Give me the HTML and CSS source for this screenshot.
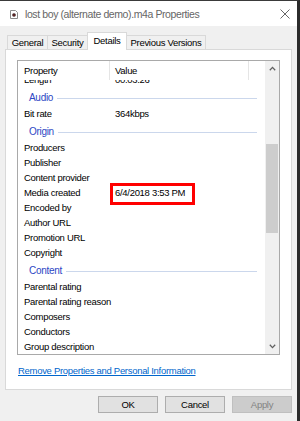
FILE: index.html
```html
<!DOCTYPE html>
<html lang="en">
<head>
  <meta charset="UTF-8" />
  <title>lost boy (alternate demo).m4a Properties</title>
  <link rel="stylesheet" href="styles.css">
</head>
<body>
  <div class="window">
    <div class="titlebar">
      <svg class="file-icon" width="8" height="9" viewBox="0 0 8 9">
        <path d="M0.5 0.5h5l2 2v6h-7z" fill="#fff" stroke="#8a8a8a" />
        <circle cx="4" cy="5" r="1.8" fill="#3a1a1a" />
        <circle cx="4" cy="5" r="0.6" fill="#c84040" />
      </svg>
      <span class="title">lost boy (alternate demo).m4a Properties</span>
      <svg class="close" width="10" height="10" viewBox="0 0 10 10">
        <path d="M0.5 0.5l9 9M9.5 0.5l-9 9" stroke="#555" stroke-width="0.9" />
      </svg>
    </div>

    <div class="tabs">
      <div class="tab t-general">General</div>
      <div class="tab t-security">Security</div>
      <div class="tab t-details active">Details</div>
      <div class="tab t-previous">Previous Versions</div>
    </div>

    <div class="panel">
      <div class="listbox">
        <div class="list-main">
          <div class="list-head">
            <div class="col-name">Property</div>
            <div class="col-value">Value</div>
            <div class="col-rest"></div>
          </div>
          <div class="list-body">
            <div class="rows">
              <div class="row"><div class="col-name">Length</div><div class="col-value">00:03:26</div></div>
              <div class="group"><span>Audio</span><i></i></div>
              <div class="row"><div class="col-name">Bit rate</div><div class="col-value">364kbps</div></div>
              <div class="group"><span>Origin</span><i></i></div>
              <div class="row"><div class="col-name">Producers</div><div class="col-value"></div></div>
              <div class="row"><div class="col-name">Publisher</div><div class="col-value"></div></div>
              <div class="row"><div class="col-name">Content provider</div><div class="col-value"></div></div>
              <div class="row"><div class="col-name">Media created</div><div class="col-value marked">6/4/2018 3:53 PM<span class="mark"></span></div></div>
              <div class="row"><div class="col-name">Encoded by</div><div class="col-value"></div></div>
              <div class="row"><div class="col-name">Author URL</div><div class="col-value"></div></div>
              <div class="row"><div class="col-name">Promotion URL</div><div class="col-value"></div></div>
              <div class="row"><div class="col-name">Copyright</div><div class="col-value"></div></div>
              <div class="group"><span>Content</span><i></i></div>
              <div class="row"><div class="col-name">Parental rating</div><div class="col-value"></div></div>
              <div class="row"><div class="col-name">Parental rating reason</div><div class="col-value"></div></div>
              <div class="row"><div class="col-name">Composers</div><div class="col-value"></div></div>
              <div class="row"><div class="col-name">Conductors</div><div class="col-value"></div></div>
              <div class="row"><div class="col-name">Group description</div><div class="col-value"></div></div>
            </div>
          </div>
        </div>
        <div class="scrollbar">
          <svg class="arrow" width="7" height="5" viewBox="0 0 7 5"><path d="M0.8 4.2L3.5 1.4L6.2 4.2" fill="none" stroke="#606060" stroke-width="1.3" /></svg>
          <div class="track"><div class="thumb"></div></div>
          <svg class="arrow" width="7" height="5" viewBox="0 0 7 5"><path d="M0.8 0.8L3.5 3.6L6.2 0.8" fill="none" stroke="#606060" stroke-width="1.3" /></svg>
        </div>
      </div>
      <a class="remove-link" href="#">Remove Properties and Personal Information</a>
    </div>

    <div class="buttons">
      <button>OK</button>
      <button>Cancel</button>
      <button disabled>Apply</button>
    </div>
  </div>
</body>
</html>
```

FILE: styles.css
```css
* { box-sizing: border-box; }
body {
  margin: 0;
  width: 300px;
  height: 421px;
  overflow: hidden;
  background: #f0f0f0;
  font-family: 'Liberation Sans', Arial, sans-serif;
  font-size: 9.5px;
  letter-spacing: -0.3px;
  color: #000;
}
.window {
  height: 421px;
  border-top: 1px solid #3a3a3a;
  border-right: 3px solid #2b2b2b;
  background: #f0f0f0;
}
.titlebar {
  height: 25px;
  background: #fff;
  display: flex;
  align-items: center;
  padding-left: 10px;
}
.file-icon { margin-top: 1px; }
.title {
  margin-left: 7px;
  font-size: 10.5px;
  letter-spacing: -0.4px;
  color: #666;
  flex: 1;
}
.close { margin-right: 7px; }

.tabs {
  display: flex;
  align-items: flex-end;
  height: 23px;
  padding-left: 7px;
  position: relative;
  z-index: 1;
}
.tab {
  height: 14px;
  line-height: 13px;
  border: 1px solid #d9d9d9;
  border-bottom: none;
  background: #f0f0f0;
  text-align: center;
}
.t-general { width: 41px; }
.t-security { width: 41px; margin-left: -1px; }
.t-details { width: 40px; margin: 0 -1px; }
.t-previous { width: 80px; }
.tab.active {
  height: 18px;
  line-height: 15px;
  background: #fff;
  margin-bottom: -1px;
  position: relative;
  z-index: 2;
}

.panel {
  margin-left: 5px;
  width: 287px;
  height: 341px;
  background: #fff;
  border: 1px solid #d9d9d9;
  padding: 10px 0 0 11px;
}
.listbox {
  width: 263px;
  height: 295px;
  border: 1px solid #a9a9a9;
  display: flex;
}
.list-main {
  flex: 1;
  display: flex;
  flex-direction: column;
  overflow: hidden;
}
.list-head {
  height: 19px;
  display: flex;
  align-items: center;
  background: #fff;
  position: relative;
  z-index: 1;
}
.list-head .col-name,
.list-head .col-value {
  height: 19px;
  line-height: 19px;
  border-right: 1px solid #e5e5e5;
}
.list-head .col-value { width: 139px; }
.col-name {
  width: 92px;
  padding-left: 6px;
  white-space: nowrap;
}
.col-value {
  padding-left: 5px;
  white-space: nowrap;
}
.list-body {
  flex: 1;
  overflow: hidden;
}
.rows { margin-top: -8px; }
.row {
  height: 15px;
  line-height: 15px;
  display: flex;
}
.group {
  height: 19px;
  display: flex;
  align-items: center;
  padding: 2px 0 0 11px;
  color: #2c47c4;
}
.group span { font-size: 10px; }
.group i {
  width: 0;
  flex-grow: 1;
  margin: 1px 8px 0 4px;
  height: 1px;
  background: #cbd7ec;
}
.marked { position: relative; }
.mark {
  position: absolute;
  left: 0;
  top: -2px;
  width: 85px;
  height: 22px;
  border: 3px solid #f00;
}

.scrollbar {
  width: 14px;
  background: #f0f0f0;
  display: flex;
  flex-direction: column;
  align-items: center;
}
.arrow { margin: 5px 0; flex: 0 0 auto; }
.track {
  flex: 1;
  width: 100%;
  padding: 0 1px;
}
.thumb {
  margin-top: 68px;
  height: 89px;
  background: #cdcdcd;
}

.remove-link {
  display: block;
  margin: 10px 0 0 1px;
  color: #0066cc;
  text-decoration: underline;
  line-height: 12px;
}

.buttons {
  display: flex;
  justify-content: flex-end;
  gap: 7px;
  padding: 6px 5px 0 0;
}
button {
  width: 60px;
  height: 17px;
  padding: 0;
  font: inherit;
  letter-spacing: inherit;
  background: #e1e1e1;
  border: 1px solid #adadad;
  color: #000;
}
button:disabled {
  background: #cccccc;
  border-color: #bfbfbf;
  color: #838383;
}
```
